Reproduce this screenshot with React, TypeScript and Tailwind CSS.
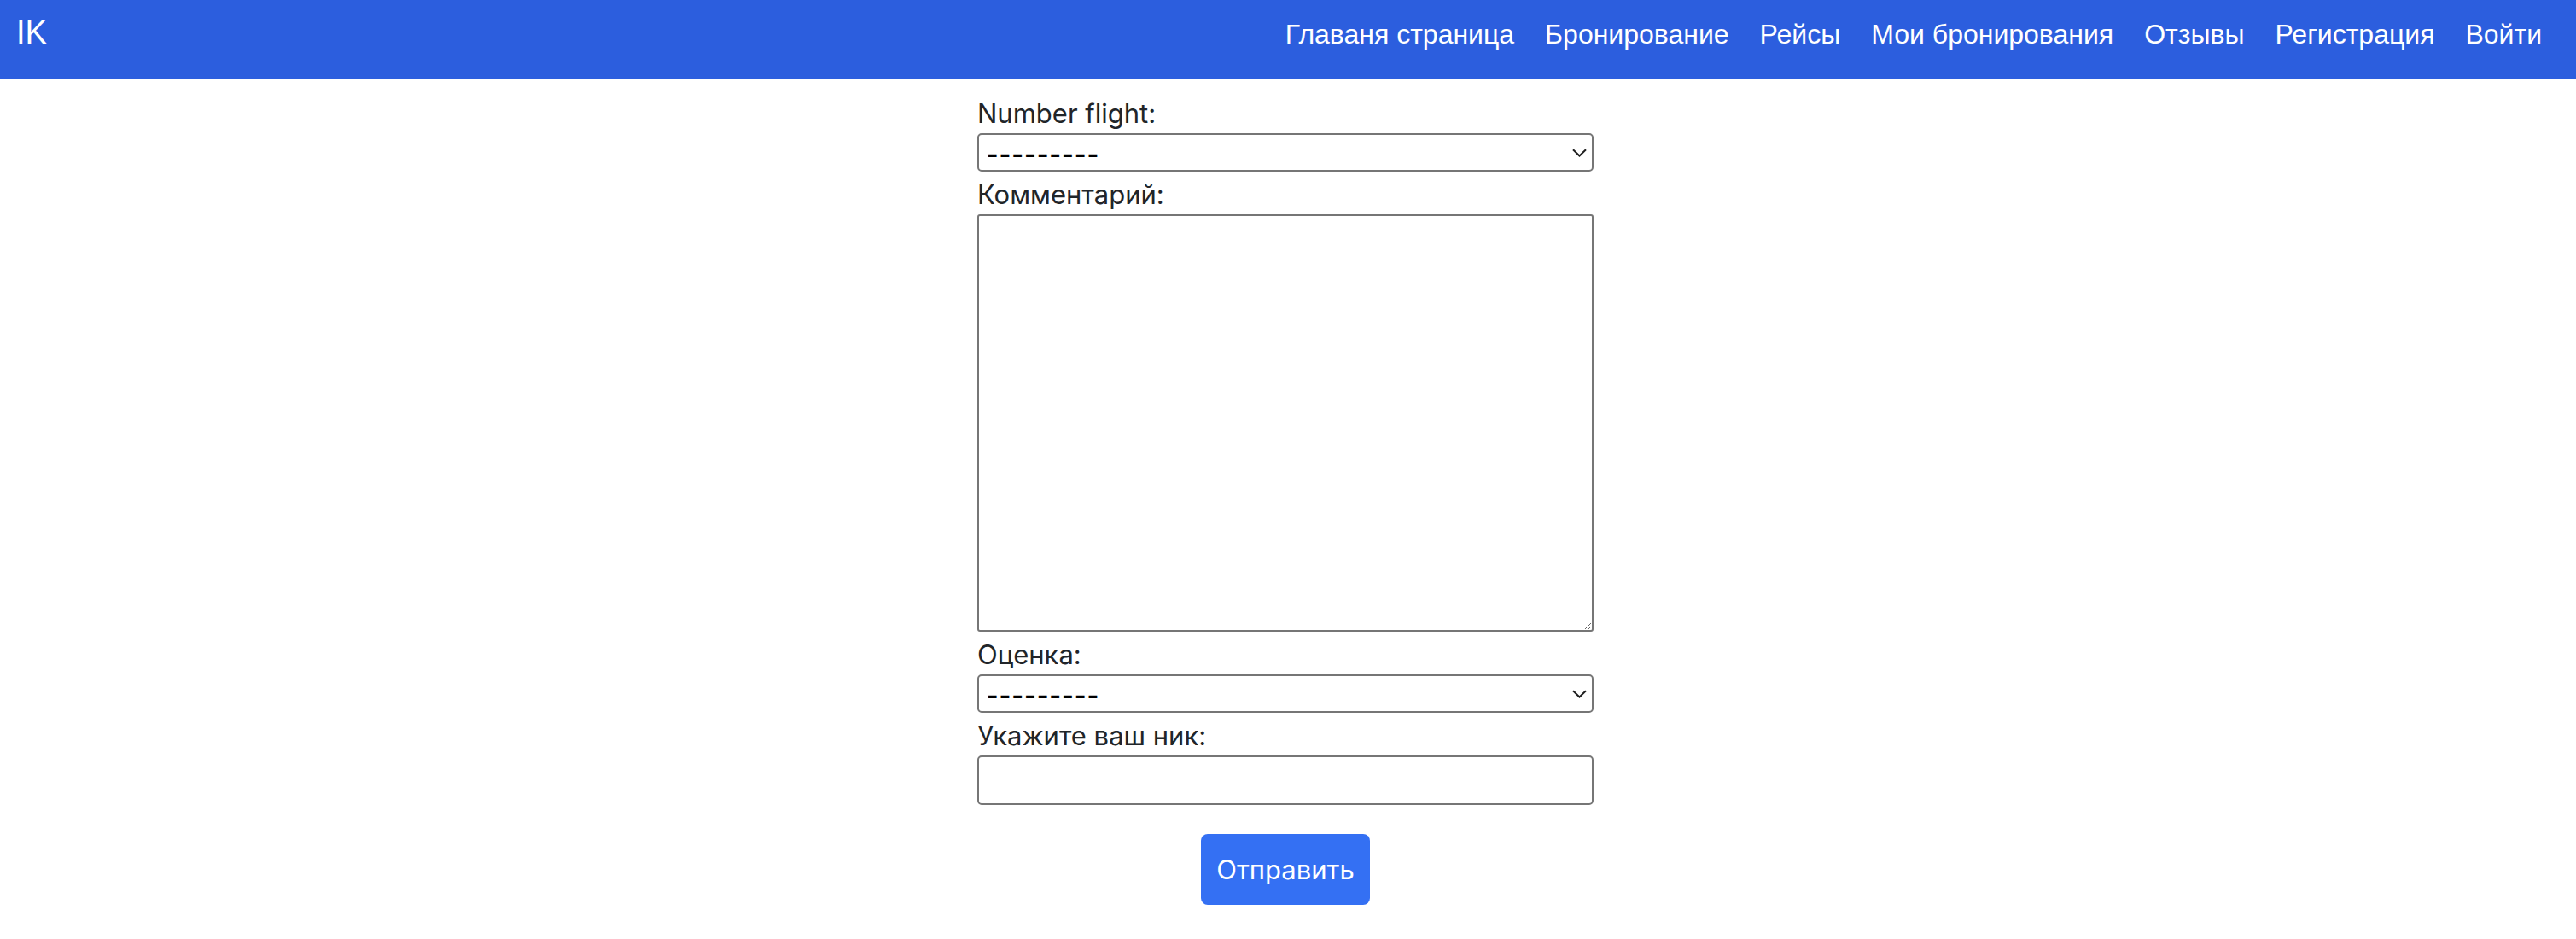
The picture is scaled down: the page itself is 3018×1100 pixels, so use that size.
import React from 'react';

const links = ['Главаня страница', 'Бронирование', 'Рейсы', 'Мои бронирования', 'Отзывы', 'Регистрация', 'Войти'];

const Chevron: React.FC = () => (
    <svg width="17" height="10" viewBox="0 0 17 10" className="pointer-events-none absolute right-[8px] top-1/2 -translate-y-1/2">
        <path d="M1 1.2 L8.5 8.5 L16 1.2" fill="none" stroke="#1f1f1f" strokeWidth="2" />
    </svg>
);

const Select: React.FC<{ name: string }> = ({ name }) => (
    <div className="relative h-[45px] w-full">
        <select
            name={name}
            className="h-full w-full appearance-none rounded-[5px] border-2 border-[#767676] bg-white pl-[9px] pr-[36px] text-[40px] leading-none tracking-[1.4px] text-black outline-none"
            style={{ fontFamily: '"Liberation Sans", Arial, sans-serif' }}
            defaultValue=""
        >
            <option value="">---------</option>
        </select>
        <Chevron />
    </div>
);

export default function App() {
    return (
        <div className="min-h-screen bg-white" style={{ fontFamily: 'Inter, "Noto Sans", sans-serif' }}>
            <nav className="flex h-[92px] items-start justify-between bg-[#2c5ede] pl-[19px] pr-[22px] pt-[8px]">
                <a className="text-[38px] leading-[60px] text-white" style={{ fontFamily: '"Liberation Sans", Arial, sans-serif' }}>IK</a>
                <ul className="mt-[8px] flex" style={{ fontFamily: '"Liberation Sans", Arial, sans-serif' }}>
                    {links.map((l) => (
                        <li key={l}>
                            <a className="block px-[18px] text-[32px] leading-[48px] text-white">{l}</a>
                        </li>
                    ))}
                </ul>
            </nav>

            <main className="flex justify-center pr-[6px] pt-[18px]">
                <form className="flex w-[722px] flex-col text-[#212529]">
                    <label className="text-[31px] leading-[46px]">Number flight:</label>
                    <Select name="flight" />

                    <label className="mt-[4px] text-[31px] leading-[46px]">Комментарий:</label>
                    <textarea className="h-[489px] w-full rounded-[3px] border-2 border-[#767676] bg-white outline-none" />

                    <label className="mt-[4px] text-[31px] leading-[46px]">Оценка:</label>
                    <Select name="rating" />

                    <label className="mt-[4px] text-[31px] leading-[46px]">Укажите ваш ник:</label>
                    <input type="text" className="h-[58px] w-full rounded-[5px] border-2 border-[#767676] bg-white outline-none" />

                    <div className="flex justify-center pt-[34px]">
                        <button type="submit" className="h-[83px] w-[198px] rounded-[8px] bg-[#3470f3] text-[31px] leading-[48px] text-white">
                            Отправить
                        </button>
                    </div>
                </form>
            </main>
        </div>
    );
}
